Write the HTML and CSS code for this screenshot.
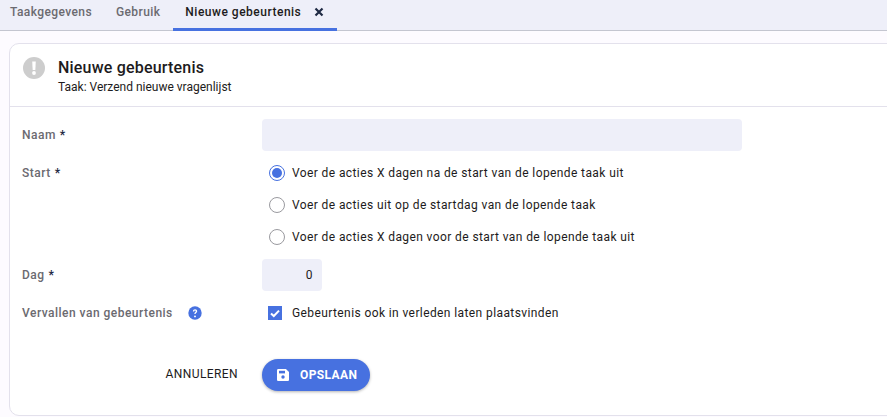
FILE: index.html
```html
<!DOCTYPE html>
<html lang="nl">
<head>
<meta charset="utf-8">
<title>Nieuwe gebeurtenis</title>
<link rel="stylesheet" href="styles.css">
</head>
<body>
<nav class="tabs">
  <span class="tab">Taakgegevens</span>
  <span class="tab">Gebruik</span>
  <span class="tab active">Nieuwe gebeurtenis
    <svg class="close" viewBox="0 0 10 10" width="10" height="10"><path d="M1.5 1.5l7 7M8.5 1.5l-7 7" stroke="#1f2a44" stroke-width="2.2" fill="none"/></svg>
  </span>
</nav>
<main class="card">
  <header class="card-head">
    <svg class="alert" viewBox="0 0 22 22" width="22" height="22"><circle cx="11" cy="11" r="11" fill="#cdcdcd"/><path d="M9.2 4.5h3.6l-.5 8.5H9.7z" fill="#fff"/><circle cx="11" cy="16" r="1.9" fill="#fff"/></svg>
    <div>
      <h1>Nieuwe gebeurtenis</h1>
      <p>Taak: Verzend nieuwe vragenlijst</p>
    </div>
  </header>
  <form class="form">
    <div class="row row-name">
      <label class="label">Naam <b>*</b></label>
      <div class="input wide"></div>
    </div>
    <div class="row row-start">
      <label class="label">Start <b>*</b></label>
      <div class="options">
        <div class="option"><span class="radio checked"></span>Voer de acties X dagen na de start van de lopende taak uit</div>
        <div class="option"><span class="radio"></span>Voer de acties uit op de startdag van de lopende taak</div>
        <div class="option"><span class="radio"></span>Voer de acties X dagen voor de start van de lopende taak uit</div>
      </div>
    </div>
    <div class="row row-day">
      <label class="label">Dag <b>*</b></label>
      <div class="input small">0</div>
    </div>
    <div class="row row-check">
      <label class="label">Vervallen van gebeurtenis
        <svg class="help" viewBox="0 0 14 14" width="14" height="14"><circle cx="7" cy="7" r="6.7" fill="#4771e0"/><path d="M4.9 5.4c0-1.3 1-2.1 2.2-2.1 1.2 0 2.1.8 2.1 1.9 0 1.5-1.6 1.5-1.6 2.8H6.3c0-1.9 1.5-1.9 1.5-2.8 0-.4-.3-.7-.8-.7-.5 0-.8.4-.8.9z" fill="#fff"/><circle cx="7" cy="10.4" r=".95" fill="#fff"/></svg>
      </label>
      <div class="option"><span class="checkbox"><svg viewBox="0 0 14 14" width="14" height="14"><path d="M3 7.4l2.8 2.6L11 4.6" stroke="#fff" stroke-width="2" fill="none"/></svg></span>Gebeurtenis ook in verleden laten plaatsvinden</div>
    </div>
    <div class="actions">
      <span class="cancel">ANNULEREN</span>
      <span class="save">
        <svg viewBox="0 0 12 12" width="12" height="12"><path d="M1.3 0h7.6L12 3.1v7.6c0 .7-.6 1.3-1.3 1.3H1.3C.6 12 0 11.4 0 10.7V1.3C0 .6.6 0 1.3 0z" fill="#fff"/><rect x="2" y="1.8" width="6" height="2.6" fill="#4771e0"/><circle cx="6" cy="8" r="1.7" fill="#4771e0"/></svg>
        OPSLAAN
      </span>
    </div>
  </form>
</main>
</body>
</html>
```

FILE: styles.css
```css
html, body {
  margin: 0;
  height: 417px;
  overflow: hidden;
}
body {
  background: #fdfbff;
  font-family: Roboto, "Liberation Sans", sans-serif;
  color: #1d1b20;
  font-size: 12px;
  letter-spacing: 0.4px;
}
.tabs {
  display: flex;
  height: 30px;
  background: #eeeff9;
  border-bottom: 1px solid #c4c6d0;
  font-weight: 500;
}
.tab {
  display: flex;
  align-items: center;
  padding: 0 10px 7px;
  margin-bottom: -1px;
  color: #6b6a70;
  height: 24px;
  box-sizing: content-box;
}
.tab:nth-child(2) { padding-right: 13px; margin-left: 4px; }
.tab.active {
  color: #1d1b20;
  border-bottom: 3px solid #4771e0;
  padding: 0 13px 0 12px;
  margin-left: 0;
  height: 28px;
  align-items: flex-start;
  line-height: 24px;
  letter-spacing: 0.5px;
}
.close { margin: 7px 0 0 13px; }
.card {
  margin: 12px -20px 0 9px;
  height: 373px;
  background: #fff;
  border: 1px solid #e3e1ec;
  border-radius: 10px;
  box-sizing: border-box;
}
.card-head {
  display: flex;
  gap: 13px;
  height: 63px;
  padding: 14px 0 0 13px;
  box-sizing: border-box;
  border-bottom: 1px solid #e3e1ec;
}
.alert { flex: none; margin-top: -1px; }
h1 {
  margin: 0;
  font-size: 16px;
  font-weight: 500;
  letter-spacing: 0.2px;
  line-height: 20px;
}
.card-head p {
  margin: 2px 0 0;
  font-size: 12px;
  letter-spacing: 0;
  line-height: 14px;
}
.form { padding: 12px 0 0 12px; }
.row { display: flex; }
.label {
  width: 240px;
  flex: none;
  font-weight: 500;
  color: #6b6a70;
  line-height: 14px;
  display: flex;
  align-items: center;
  gap: 4px;
  height: 14px;
  letter-spacing: 0.48px;
}
.label b { color: #1f2a44; font-weight: 700; }
.row-name .label { margin-top: 9px; }
.input {
  background: #eeeff9;
  border-radius: 4px;
  height: 32px;
}
.wide { width: 480px; }
.small {
  width: 60px;
  text-align: right;
  line-height: 32px;
  padding-right: 9px;
  box-sizing: border-box;
}
.row-start { margin-top: 14px; }
.row-start .label { margin-top: 1px; }
.options { display: flex; flex-direction: column; gap: 16px; }
.option {
  display: flex;
  align-items: center;
  height: 16px;
  line-height: 16px;
}
.radio {
  width: 16px;
  height: 16px;
  box-sizing: border-box;
  border: 1px solid #9a9a9f;
  border-radius: 50%;
  margin: 0 7px;
  position: relative;
}
.radio.checked { border-color: #4771e0; }
.radio.checked::after {
  content: "";
  position: absolute;
  inset: 2px;
  border-radius: 50%;
  background: #4771e0;
}
.row-day { margin-top: 14px; }
.row-day .label { margin-top: 9px; }
.row-check { margin-top: 15px; }
.help { margin-left: 11px; }
.checkbox {
  width: 14px;
  height: 14px;
  background: #4771e0;
  margin: 0 10px 0 6px;
  display: block;
  line-height: 0;
}
.row-check .option { height: 14px; }
.actions {
  display: flex;
  align-items: center;
  margin-top: 39px;
}
.cancel {
  width: 216px;
  padding-right: 24px;
  text-align: right;
  letter-spacing: 0.4px;
  margin-top: -2px;
}
.save {
  display: flex;
  align-items: center;
  gap: 11px;
  height: 32px;
  padding: 0 13px 0 15px;
  background: #4771e0;
  color: #fff;
  border-radius: 16px;
  font-weight: 700;
  box-shadow: 0 1px 3px rgba(0, 0, 0, .3);
}
```
